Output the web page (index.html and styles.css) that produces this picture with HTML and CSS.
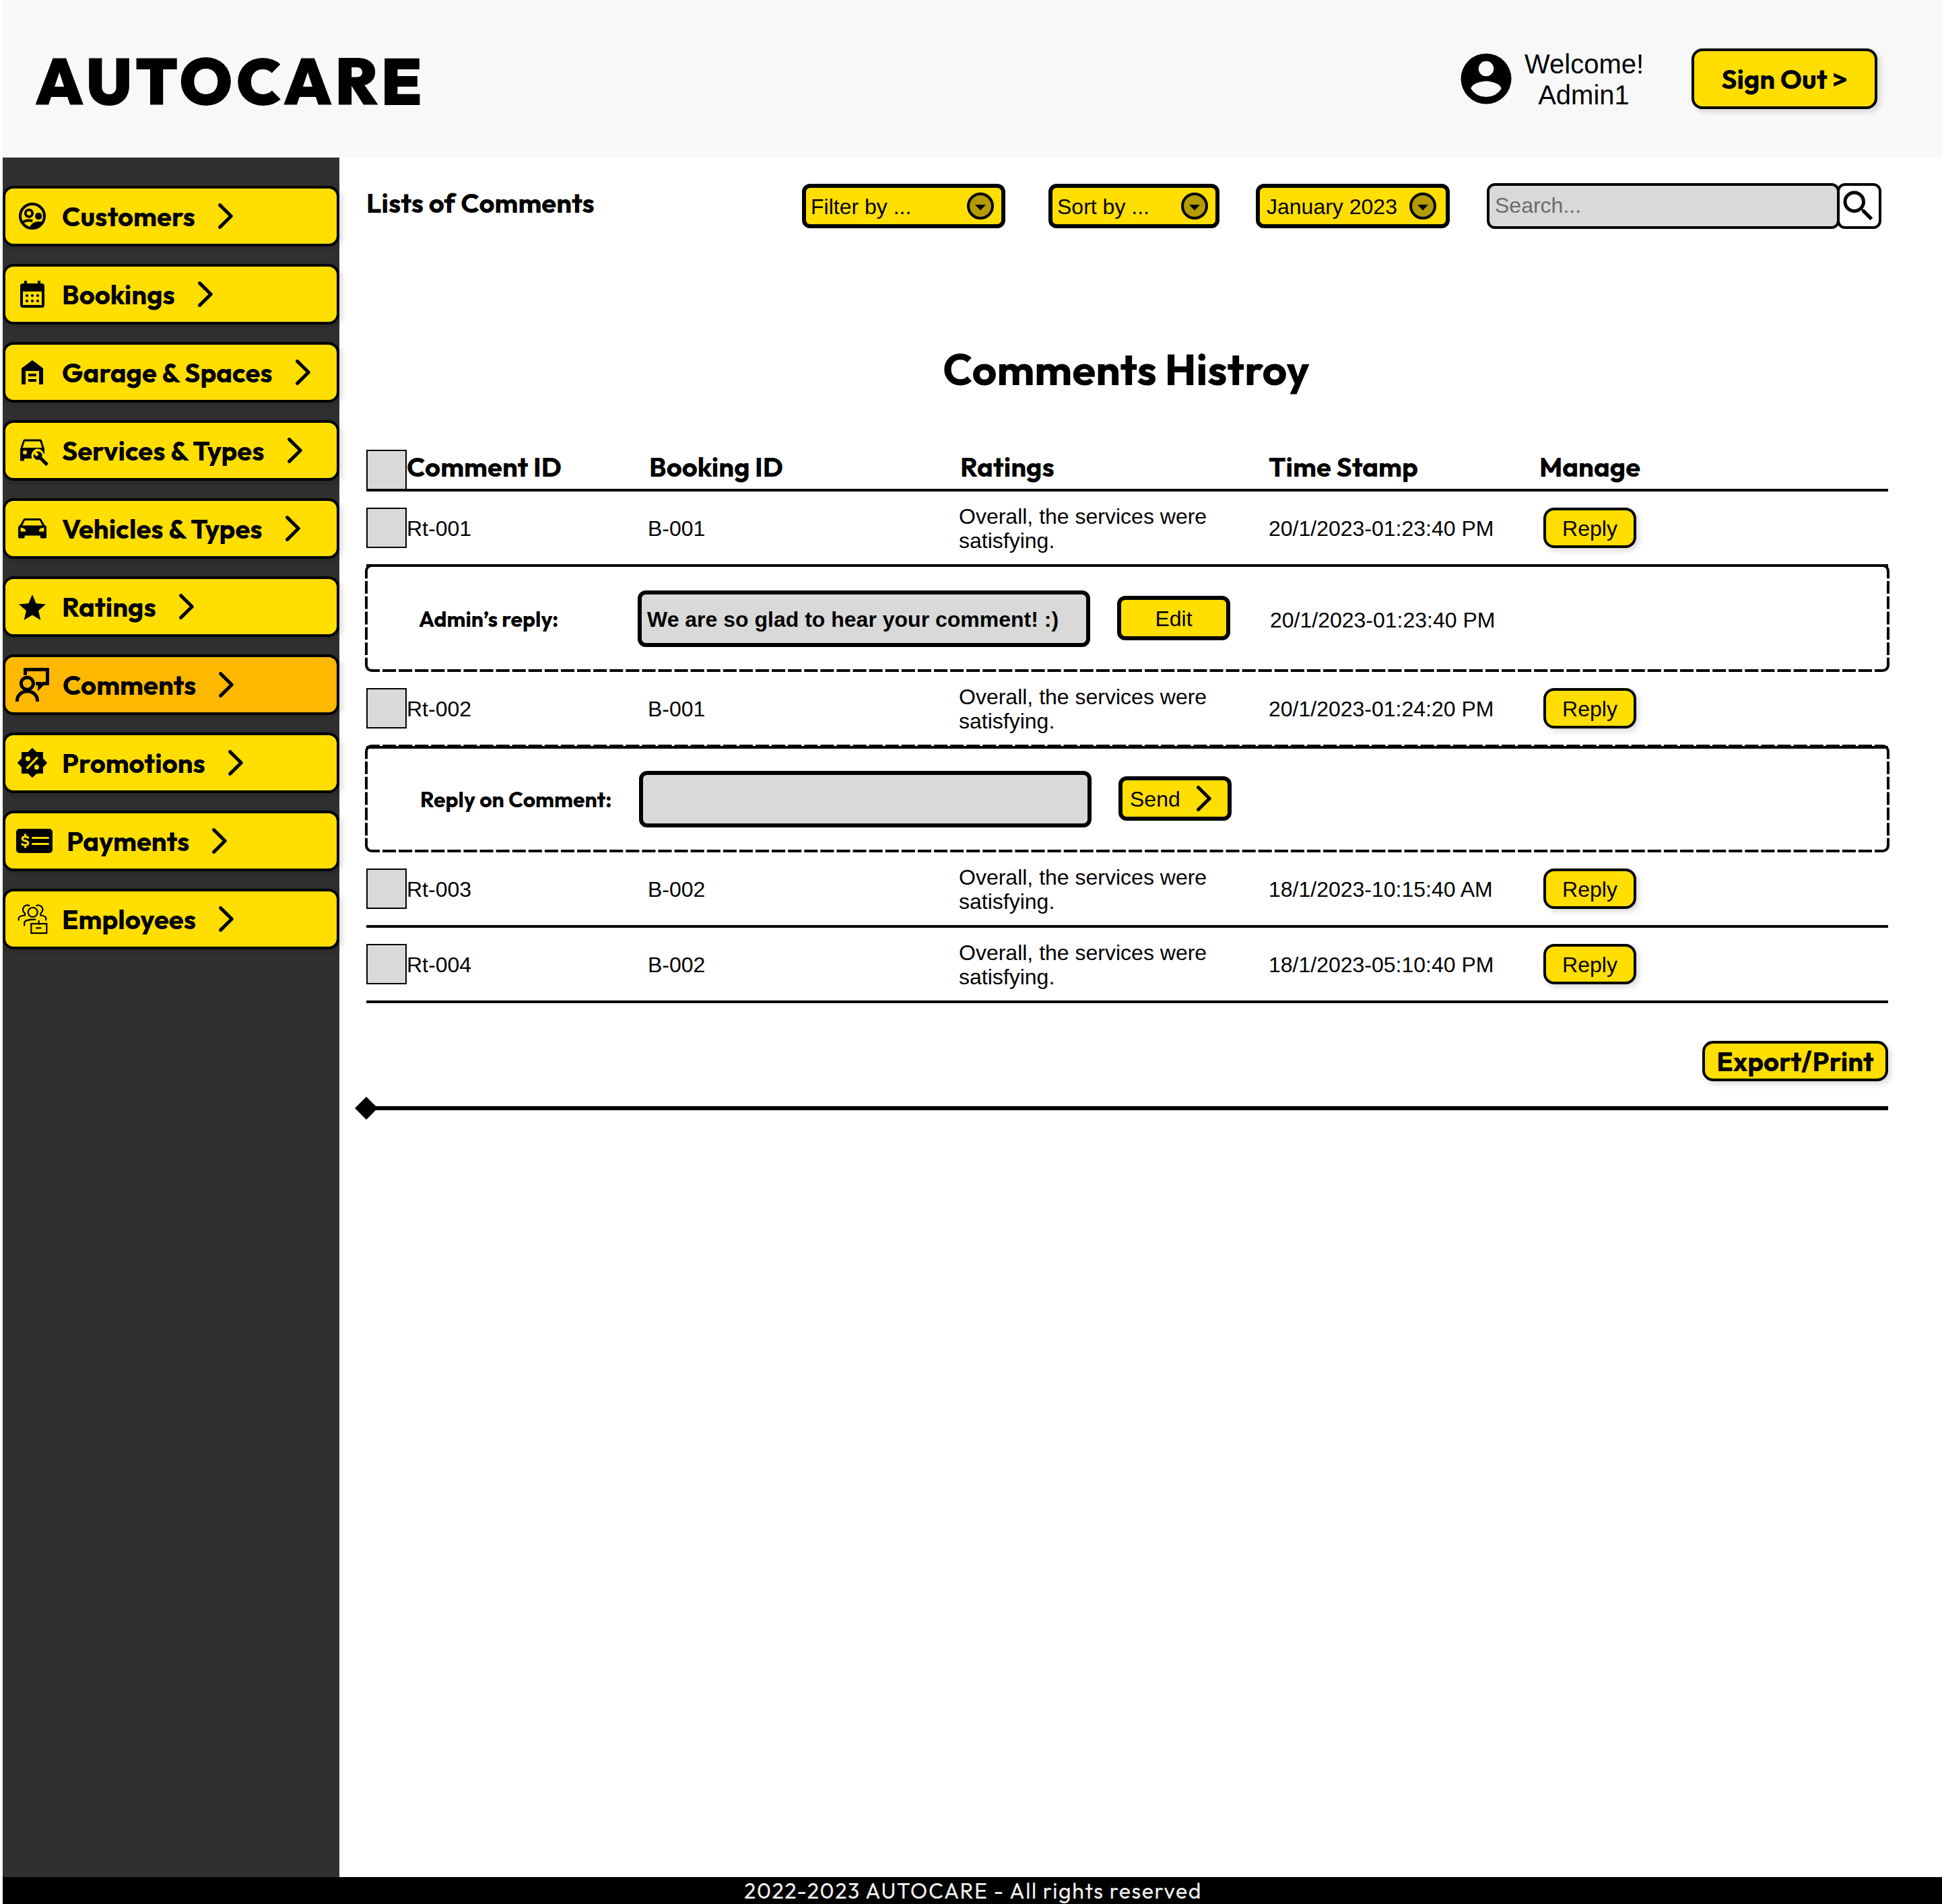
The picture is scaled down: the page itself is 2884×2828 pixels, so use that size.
FILE: index.html
```html
<!DOCTYPE html>
<html lang="en">
<head>
<meta charset="utf-8">
<title>AUTOCARE - Comments</title>
<link rel="stylesheet" href="styles.css">
</head>
<body>
<svg class="defs" width="0" height="0" aria-hidden="true">
  <symbol id="chevron" viewBox="0 0 22 38"><path d="M2.6 2.6 19.2 19 2.6 35.4" fill="none" stroke="#000" stroke-width="5" stroke-linecap="round" stroke-linejoin="round"/></symbol>
  <symbol id="frame" viewBox="0 0 2264 160">
    <g fill="none" stroke="#000" stroke-width="4">
      <path d="M26 158H2238" stroke-dasharray="20.087 4"/>
      <path d="M2 25V135M2262 25V135" stroke-dasharray="18.8 4"/>
      <path d="M22 2H10A8 8 0 0 0 2 10V21.3M2 138.7V150A8 8 0 0 0 10 158H22M2242 2H2254A8 8 0 0 1 2262 10V21.3M2262 138.7V150A8 8 0 0 1 2254 158H2242"/>
    </g>
  </symbol>
</svg>
<div class="page">
  <header class="topbar">
    <div class="brand">AUTOCARE</div>
    <div class="account">
      <svg class="avatar" viewBox="0 0 24 24"><path fill-rule="evenodd" d="M12 2a10 10 0 1 0 0 20 10 10 0 0 0 0-20zm0 3a3 3 0 1 1 0 6 3 3 0 0 1 0-6zm0 14.2a7.2 7.2 0 0 1-6-3.22c.03-1.99 4-3.08 6-3.08s5.97 1.09 6 3.08a7.2 7.2 0 0 1-6 3.22z"/></svg>
      <div class="welcome">Welcome!<br>Admin1</div>
    </div>
    <button class="btn signout">Sign Out &gt;</button>
  </header>

  <div class="body">
    <nav class="sidebar">
      <a class="nav-item">
        <svg class="nav-icon" viewBox="0 0 24 24"><circle cx="12" cy="12" r="9" fill="none" stroke="#000" stroke-width="2"/><circle cx="9.5" cy="9.9" r="2.6" fill="none" stroke="#000" stroke-width="1.9"/><circle cx="16.6" cy="12" r="2.6"/><path d="M5 16.6c2-1.5 4.600-1.700 7.200-1" fill="none" stroke="#000" stroke-width="1.900"/><path d="M10 20.800C10.500 18.200 13.200 16 16.200 16c1.600 0 2.900.2 3.800.8-1.500 2.900-4.500 4.700-8 4.700z"/></svg>
        <span>Customers</span><svg class="chevron"><use href="#chevron"/></svg></a>
      <a class="nav-item">
        <svg class="nav-icon" viewBox="0 0 24 24"><path fill-rule="evenodd" d="M19 4h-1V2h-2v2H8V2H6v2H5a2 2 0 0 0-2 2v14c0 1.100.9 2 2 2h14a2 2 0 0 0 2-2V6a2 2 0 0 0-2-2zm0 16H5V10h14z"/><circle cx="8" cy="13" r="1.050"/><circle cx="12" cy="13" r="1.050"/><circle cx="16" cy="13" r="1.050"/><circle cx="8" cy="17" r="1.050"/><circle cx="12" cy="17" r="1.050"/><circle cx="16" cy="17" r="1.050"/></svg>
        <span>Bookings</span><svg class="chevron"><use href="#chevron"/></svg></a>
      <a class="nav-item">
        <svg class="nav-icon" viewBox="0 0 24 24"><path d="M12 3 4 9v12h3V11h10v10h3V9zM9 13h6v2H9zM9 17h6v2H9z"/></svg>
        <span>Garage &amp; Spaces</span><svg class="chevron"><use href="#chevron"/></svg></a>
      <a class="nav-item">
        <svg class="nav-icon" viewBox="0 0 24 24"><path fill-rule="evenodd" d="M6.500 3.800h11.200c.7 0 1.200.4 1.400 1L21 11v7H6v1.300c0 .3-.2.5-.5.5h-2c-.3 0-.5-.2-.5-.5V11l2.100-6.200c.2-.6.700-1 1.400-1zM6.400 5.300 4.800 10h14.400l-1.500-4.700zM6.500 12a1.500 1.500 0 1 0 0 3 1.500 1.500 0 0 0 0-3z"/><path class="cut" d="M15.400 10.800a5.200 5.200 0 0 1 5 3.600l.9 0V18.500H12a5.200 5.200 0 0 1 3.400-7.700z"/><path d="M16.200 12.700a3.300 3.300 0 0 1 3 4.400l4.400 4.300c.3.300.3.600 0 .9l-.9.900c-.3.300-.6.300-.9 0l-4.400-4.400a3.300 3.300 0 0 1-4.300-4.200l2 1.900 1.700-1.500-2-2c.4-.2.900-.3 1.400-.3z"/></svg>
        <span>Services &amp; Types</span><svg class="chevron"><use href="#chevron"/></svg></a>
      <a class="nav-item">
        <svg class="nav-icon" viewBox="0 0 24 24"><path fill-rule="evenodd" d="M6.600 4.500h10.800c.6 0 1.100.3 1.400.9L21 9.300l1.200 1c.2.200.3.500.3.800v7.300c0 .5-.3.800-.8.800h-3c-.5 0-.8-.3-.8-.8v-1.100H6.300v1.100c0 .5-.3.800-.8.800h-3.200c-.5 0-.8-.3-.8-.8v-7.300c0-.3.100-.6.300-.8L3 9.300l2.200-3.900c.3-.6.800-.9 1.400-.9zM6.500 6 4.600 9.800h14.800L17.500 6zM3.300 11.400v2.300c0 .4.200.6.600.6h3.200c0-1.600-1.200-2.900-3.800-2.900zm17.400 0c-2.600 0-3.800 1.300-3.800 2.900h3.200c.4 0 .6-.2.6-.6z"/></svg>
        <span>Vehicles &amp; Types</span><svg class="chevron"><use href="#chevron"/></svg></a>
      <a class="nav-item">
        <svg class="nav-icon" viewBox="0 0 24 24"><path d="m12 18.270 6.180 3.730-1.640-7.030L22 10.240l-7.190-.61L12 3 9.190 9.630 2 10.240l5.460 4.730L5.820 22z"/></svg>
        <span>Ratings</span><svg class="chevron"><use href="#chevron"/></svg></a>
      <a class="nav-item active">
        <svg class="nav-icon nav-icon-comments" viewBox="0 0 50 50"><g fill="none" stroke="#000" stroke-width="5"><path d="M14.500 10.700V2.500h33v20.800H41l-5.200 5.200v-5.200h-5.600"/><circle cx="17.400" cy="23.200" r="9"/><path d="M2.500 50v-1.600a15 13.700 0 0 1 30 0V50"/></g></svg>
        <span>Comments</span><svg class="chevron"><use href="#chevron"/></svg></a>
      <a class="nav-item">
        <svg class="nav-icon" viewBox="0 0 24 24"><path d="M12 .9 15.200 4H20v4.800l3.100 3.200-3.100 3.200V20h-4.800L12 23.100 8.800 20H4v-4.800L.9 12 4 8.800V4h4.800z"/><g class="cut"><circle cx="8.700" cy="8.900" r="1.800"/><circle cx="15.200" cy="15.200" r="1.800"/></g><path class="cut-line" d="M7.900 16.300 16 7.800" stroke-width="1.600"/></svg>
        <span>Promotions</span><svg class="chevron"><use href="#chevron"/></svg></a>
      <a class="nav-item">
        <svg class="nav-icon nav-icon-payments" viewBox="0 0 54 36"><rect width="54" height="36" rx="5"/><g class="cut-line" stroke-width="3"><path d="M24.500 13.500h23M24.500 22.500h23" stroke-linecap="round"/><path d="M18.300 14.200c-1-1.800-2.700-2.500-4.800-2.500-2.700 0-4.400 1.200-4.400 3 0 4.300 8.800 2.300 8.800 6.400 0 2-1.800 3.200-4.500 3.200-2.400 0-4.300-.8-5.300-2.700M13.500 7.500v4M13.500 24.500v4"/></g></svg>
        <span>Payments</span><svg class="chevron"><use href="#chevron"/></svg></a>
      <a class="nav-item">
        <svg class="nav-icon" viewBox="0 0 48 48"><g fill="none" stroke="#000" stroke-width="2.2"><circle cx="24.700" cy="14" r="7"/><path d="M20 4.500A6.300 6.300 0 1 0 13 15.500V18.500C7.500 19 3.700 20.500 3.700 23.200V26.300M29.500 4.500A6.300 6.300 0 1 1 36.300 15.500V18.500C41 19 44.300 20.500 44.300 23.200V26.300M12.200 34.300V29.500C12.200 26.500 19 24.700 29.300 24.700"/><rect x="22.300" y="31" width="23" height="14"/><path d="M33.700 26v6.500M29.300 37.300h8"/></g></svg>
        <span>Employees</span><svg class="chevron"><use href="#chevron"/></svg></a>
    </nav>

    <main class="content">
      <div class="toolbar">
        <h2 class="list-title">Lists of Comments</h2>
        <div class="select filter"><span>Filter by ...</span><svg class="caret" viewBox="0 0 40 40"><circle cx="20" cy="20" r="18"/><path d="M12 18h16l-8 8.500z"/></svg></div>
        <div class="select sort"><span>Sort by ...</span><svg class="caret" viewBox="0 0 40 40"><circle cx="20" cy="20" r="18"/><path d="M12 18h16l-8 8.500z"/></svg></div>
        <div class="select month"><span>January 2023</span><svg class="caret" viewBox="0 0 40 40"><circle cx="20" cy="20" r="18"/><path d="M12 18h16l-8 8.500z"/></svg></div>
        <div class="search">
          <div class="search-field">Search...</div>
          <div class="search-btn"><svg viewBox="0 0 24 24"><path d="M15.500 14h-.79l-.28-.27A6.471 6.471 0 0 0 16 9.500 6.500 6.500 0 1 0 9.500 16c1.610 0 3.090-.59 4.230-1.570l.27.280v.79l5 4.990L20.490 19l-4.990-5zm-6 0C7.010 14 5 11.990 5 9.500S7.010 5 9.500 5 14 7.010 14 9.500 11.990 14 9.500 14z"/></svg></div>
        </div>
      </div>

      <h1 class="title">Comments Histroy</h1>

      <section class="table">
        <div class="row head">
          <i class="check"></i><span>Comment ID</span><span class="nudge">Booking ID</span><span class="nudge">Ratings</span><span>Time Stamp</span><span>Manage</span>
        </div>
        <div class="row open">
          <i class="check"></i><span>Rt-001</span><span>B-001</span><span class="text">Overall, the services were satisfying.</span><span>20/1/2023-01:23:40 PM</span><button class="btn reply">Reply</button>
        </div>
        <div class="panel">
          <svg class="frame"><use href="#frame"/><path d="M2 2H2262" stroke="#000" stroke-width="4"/></svg>
          <label>Admin’s reply:</label>
          <div class="field">We are so glad to hear your comment! :)</div>
          <button class="small">Edit</button>
          <span class="stamp">20/1/2023-01:23:40 PM</span>
        </div>
        <div class="row open">
          <i class="check"></i><span>Rt-002</span><span>B-001</span><span class="text">Overall, the services were satisfying.</span><span>20/1/2023-01:24:20 PM</span><button class="btn reply">Reply</button>
        </div>
        <div class="panel compose">
          <svg class="frame"><use href="#frame"/><path d="M26 2H2238" stroke="#000" stroke-width="4" stroke-dasharray="20.087 4"/><path d="M2 4H2262" stroke="#000" stroke-width="4"/></svg>
          <label>Reply on Comment:</label>
          <div class="field"></div>
          <button class="small send">Send<svg class="chevron"><use href="#chevron"/></svg></button>
        </div>
        <div class="row">
          <i class="check"></i><span>Rt-003</span><span>B-002</span><span class="text">Overall, the services were satisfying.</span><span>18/1/2023-10:15:40 AM</span><button class="btn reply">Reply</button>
        </div>
        <div class="row">
          <i class="check"></i><span>Rt-004</span><span>B-002</span><span class="text">Overall, the services were satisfying.</span><span>18/1/2023-05:10:40 PM</span><button class="btn reply">Reply</button>
        </div>
      </section>

      <button class="btn export">Export/Print</button>
      <div class="divider"></div>
    </main>
  </div>

  <footer class="footer">2022-2023 AUTOCARE - All rights reserved</footer>
</div>
</body>
</html>
```
FILE: styles.css
```css
* { box-sizing: border-box; }

body {
  margin: 0;
  background: #fff;
  color: #000;
  font-family: "Liberation Sans", Helvetica, Arial, sans-serif;
  font-size: 32px;
  line-height: 36px;
}

.defs { position: absolute; }

button {
  margin: 0;
  padding: 0;
  font: inherit;
  color: inherit;
}

.page {
  display: flex;
  flex-direction: column;
  height: 2828px;
  margin-left: 4px;
}

/* Header */
.topbar {
  display: flex;
  align-items: center;
  flex: none;
  height: 234px;
  padding: 0 96px 0 48px;
  background: #f8f8f8;
}

.brand {
  margin-right: auto;
  padding-top: 7px;
  font: 900 96px/121px Outfit, Lato, sans-serif;
  letter-spacing: 4.8px;
}

.account {
  display: flex;
  align-items: center;
  margin-right: 72px;
}

.avatar { width: 90px; height: 90px; }

.welcome {
  width: 176px;
  margin-left: 12px;
  padding-top: 2px;
  font-size: 40px;
  line-height: 46px;
  text-align: center;
  white-space: nowrap;
}

.btn {
  border: 4px solid #000;
  border-radius: 16px;
  background: #ffde00;
  box-shadow: 4px 4px 8px rgba(30, 15, 30, .15);
}

.signout,
.export {
  width: 276px;
  height: 90px;
  font: 700 40px/50px Outfit, Lato, sans-serif;
}

/* Sidebar */
.body {
  display: flex;
  flex: 1;
  min-height: 0;
}

.sidebar {
  display: flex;
  flex-direction: column;
  gap: 26px;
  flex: none;
  width: 500px;
  padding-top: 42px;
  background: #303030;
}

.nav-item {
  --fill: #ffde00;
  display: flex;
  align-items: center;
  flex: none;
  height: 90px;
  padding-left: 16px;
  border: 4px solid #000;
  border-radius: 16px;
  background: var(--fill);
  box-shadow: 4px 4px 8px rgba(0, 0, 0, .15);
  font: 700 40px/50.4px Outfit, Lato, sans-serif;
}

.nav-item.active { --fill: #ffb800; }

.nav-icon { width: 48px; height: 48px; margin-right: 20px; }
.nav-icon-comments { width: 50px; height: 50px; margin: 0 20px 0 -1px; }
.nav-icon-payments { width: 54px; height: 36px; margin-right: 21px; }

.cut { fill: var(--fill); }
.cut-line { fill: none; stroke: var(--fill); }

.chevron {
  flex: none;
  width: 22px;
  height: 38px;
}

.nav-item .chevron { margin-left: 34px; }

/* Main area */
.content {
  flex: 1;
  padding: 38px 80px 0 40px;
}

.toolbar {
  display: flex;
  align-items: center;
  height: 68px;
  padding-right: 10px;
}

.list-title {
  margin: 0 auto 10px 0;
  font: 700 40px/50px Outfit, Lato, sans-serif;
}

.select {
  display: flex;
  align-items: center;
  justify-content: space-between;
  height: 66px;
  padding: 0 11px 0 7px;
  border: 6px solid #000;
  border-radius: 12px;
  background: #ffde00;
}

.select span { padding-top: 2px; }
.filter { width: 302px; margin-right: 64px; }
.sort { width: 254px; margin-right: 54px; }
.month { width: 288px; margin-right: 55px; padding: 0 14px 0 10px; }

.caret { width: 40px; height: 40px; }
.caret circle { fill: #b39b00; stroke: #000; stroke-width: 4; }

.search { display: flex; }

.search-field {
  z-index: 1;
  width: 524px;
  height: 68px;
  padding: 11px 8px;
  border: 4px solid #000;
  border-radius: 12px;
  background: #d9d9d9;
  color: #6b6b6b;
}

.search-btn {
  display: flex;
  align-items: center;
  width: 66px;
  height: 68px;
  margin-left: -4px;
  border: 4px solid #000;
  border-radius: 12px;
  background: #fff;
}

.search-btn svg { flex: none; width: 60px; height: 60px; margin-left: -2px; }

.title {
  margin: 168px 0 79px;
  padding-right: 3px;
  font: 700 64px/81px Outfit, Lato, sans-serif;
  text-align: center;
}

/* Table */
.row {
  display: grid;
  grid-template-columns: 60px 358px 462px 460px 402px 1fr;
  align-items: center;
  height: 112px;
  border-bottom: 4px solid #000;
}

.row.open { height: 108px; border-bottom: 0; }
.row span { padding-top: 2px; }
.row .text { width: 400px; }

.check {
  width: 60px;
  height: 60px;
  border: 2px solid #000;
  background: #d9d9d9;
}

.row.head {
  align-items: start;
  height: 62px;
  font: 700 40px/50px Outfit, Lato, sans-serif;
}

.head .check { height: 58px; border-bottom: 0; }
.head span { padding-top: 0; }
.head .nudge { padding-left: 2px; }

.reply {
  width: 138px;
  height: 60px;
  margin-left: 6px;
  padding-top: 2px;
}

.panel {
  position: relative;
  display: grid;
  grid-template-columns: 324px 712px 227px 1fr;
  align-items: center;
  height: 160px;
  margin: 0 -2px;
  padding-left: 81px;
}

.panel.compose { padding-left: 83px; }

.frame {
  position: absolute;
  inset: 0;
  width: 2264px;
  height: 160px;
}

.panel label {
  margin-left: -1px;
  padding-top: 2px;
  font: 700 32px/40px Outfit, Lato, sans-serif;
}

.field {
  width: 672px;
  height: 84px;
  margin-top: 2px;
  padding: 19px 8px 0;
  border: 6px solid #000;
  border-radius: 12px;
  background: #d9d9d9;
  font-weight: 700;
  white-space: nowrap;
}

.small {
  width: 168px;
  height: 66px;
  padding-top: 2px;
  border: 6px solid #000;
  border-radius: 12px;
  background: #ffde00;
}

.send {
  display: flex;
  align-items: center;
  padding-left: 11px;
}

.send .chevron { margin: -2px 0 0 24px; }
.stamp { padding-top: 6px; }

.export {
  display: block;
  height: 60px;
  margin: 56px 0 37px auto;
}

.divider {
  position: relative;
  height: 6px;
  background: #000;
}

.divider::before {
  content: "";
  position: absolute;
  left: -12px;
  top: -9px;
  width: 24px;
  height: 24px;
  background: #000;
  transform: rotate(45deg);
}

.footer {
  flex: none;
  height: 40px;
  padding-left: 2px;
  background: #000;
  color: #f0f0f0;
  font: 400 32px/40px Outfit, Lato, sans-serif;
  letter-spacing: 1.6px;
  text-align: center;
}
```
